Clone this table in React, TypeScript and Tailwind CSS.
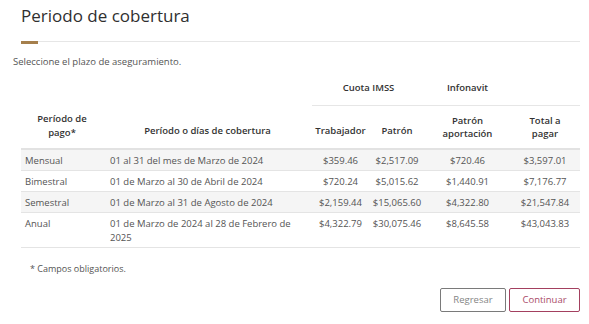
import React from "react";

type Row = {
  plazo: string;
  periodo: string;
  trabajador: string;
  patron: string;
  infonavit: string;
  total: string;
};

const rows: Row[] = [
  { plazo: "Mensual", periodo: "01 al 31 del mes de Marzo de 2024", trabajador: "$359.46", patron: "$2,517.09", infonavit: "$720.46", total: "$3,597.01" },
  { plazo: "Bimestral", periodo: "01 de Marzo al 30 de Abril de 2024", trabajador: "$720.24", patron: "$5,015.62", infonavit: "$1,440.91", total: "$7,176.77" },
  { plazo: "Semestral", periodo: "01 de Marzo al 31 de Agosto de 2024", trabajador: "$2,159.44", patron: "$15,065.60", infonavit: "$4,322.80", total: "$21,547.84" },
  { plazo: "Anual", periodo: "01 de Marzo de 2024 al 28 de Febrero de 2025", trabajador: "$4,322.79", patron: "$30,075.46", infonavit: "$8,645.58", total: "$43,043.83" },
];

export default function App() {
  return (
    <div className="w-[589px] h-[324px] bg-white text-[#545454] font-['Open_Sans',sans-serif] overflow-hidden">
      {/* encabezado */}
      <div className="pl-[21px] pr-[9px] pt-[4px]">
        <h2 className="text-[17px] leading-[23px] text-[#2f2f2f] font-normal">Periodo de cobertura</h2>
        <div className="mt-[14px] h-[1px] bg-[#e6e6e6] relative">
          <div className="absolute left-0 top-0 w-[17px] h-[3px] bg-[#a57f4c]" />
        </div>
      </div>
      <p className="ml-[13px] mt-[14px] text-[9.5px] leading-[12px]">Seleccione el plazo de aseguramiento.</p>

      <div className="pl-[21px] pr-[9px] mt-[8px]">
        <table className="w-full table-fixed border-collapse text-[9.5px]">
          <colgroup>
            <col className="w-[82px]" />
            <col className="w-[209px]" />
            <col className="w-[57px]" />
            <col className="w-[56px]" />
            <col className="w-[85px]" />
            <col className="w-[70px]" />
          </colgroup>
          <thead className="text-[#333] font-semibold">
            <tr>
              <th colSpan={2} />
              <th colSpan={2} className="h-[29px] p-0 pt-[5px] font-semibold text-center align-top leading-[13px] border-b border-[#e6e6e6]">Cuota IMSS</th>
              <th className="p-0 pt-[5px] font-semibold text-center align-top leading-[13px] border-b border-[#e6e6e6]">Infonavit</th>
              <th className="p-0 border-b border-[#e6e6e6]" />
            </tr>
            <tr className="border-b-2 border-[#e2e2e2]">
              <th className="h-[44px] p-0 pb-[1px] font-semibold text-center leading-[14px]">Período de<br />pago*</th>
              <th className="p-0 font-semibold text-center align-bottom pb-[11px] leading-[13px]">Período o días de cobertura</th>
              <th className="p-0 font-semibold text-center align-bottom pb-[11px] leading-[13px]">Trabajador</th>
              <th className="p-0 font-semibold text-center align-bottom pb-[11px] leading-[13px]">Patrón</th>
              <th className="p-0 font-semibold text-center leading-[13px]">Patrón<br />aportación</th>
              <th className="p-0 font-semibold text-center leading-[13px]">Total a<br />pagar</th>
            </tr>
          </thead>
          <tbody>
            {rows.map((r, i) => (
              <tr key={r.plazo} className={`border-b border-[#e4e4e4] ${i % 2 === 0 ? "bg-[#f5f5f5]" : "bg-white"}`}>
                <td className="pl-[4px] pr-0 pt-[4px] pb-[2px] leading-[14px] align-top">{r.plazo}</td>
                <td className="pl-[7px] pr-[20px] pt-[4px] pb-[2px] leading-[14px] align-top">{r.periodo}</td>
                <td className="px-0 text-center pt-[4px] pb-[2px] leading-[14px] align-top">{r.trabajador}</td>
                <td className="px-0 text-center pt-[4px] pb-[2px] leading-[14px] align-top">{r.patron}</td>
                <td className="px-0 text-center pt-[4px] pb-[2px] leading-[14px] align-top">{r.infonavit}</td>
                <td className="px-0 text-center pt-[4px] pb-[2px] leading-[14px] align-top">{r.total}</td>
              </tr>
            ))}
          </tbody>
        </table>
      </div>

      <p className="ml-[30px] mt-[15px] text-[9px] leading-[12px]">* Campos obligatorios.</p>

      <div className="flex justify-end gap-[3px] pr-[9px] mt-[13px]">
        <button className="w-[66px] h-[24px] rounded-[2px] border border-[#7a7a7a] text-[9.5px] text-[#858585]">Regresar</button>
        <button className="w-[71px] h-[24px] rounded-[2px] border border-[#a3405f] text-[9.5px] text-[#a94a68]">Continuar</button>
      </div>
    </div>
  );
}
